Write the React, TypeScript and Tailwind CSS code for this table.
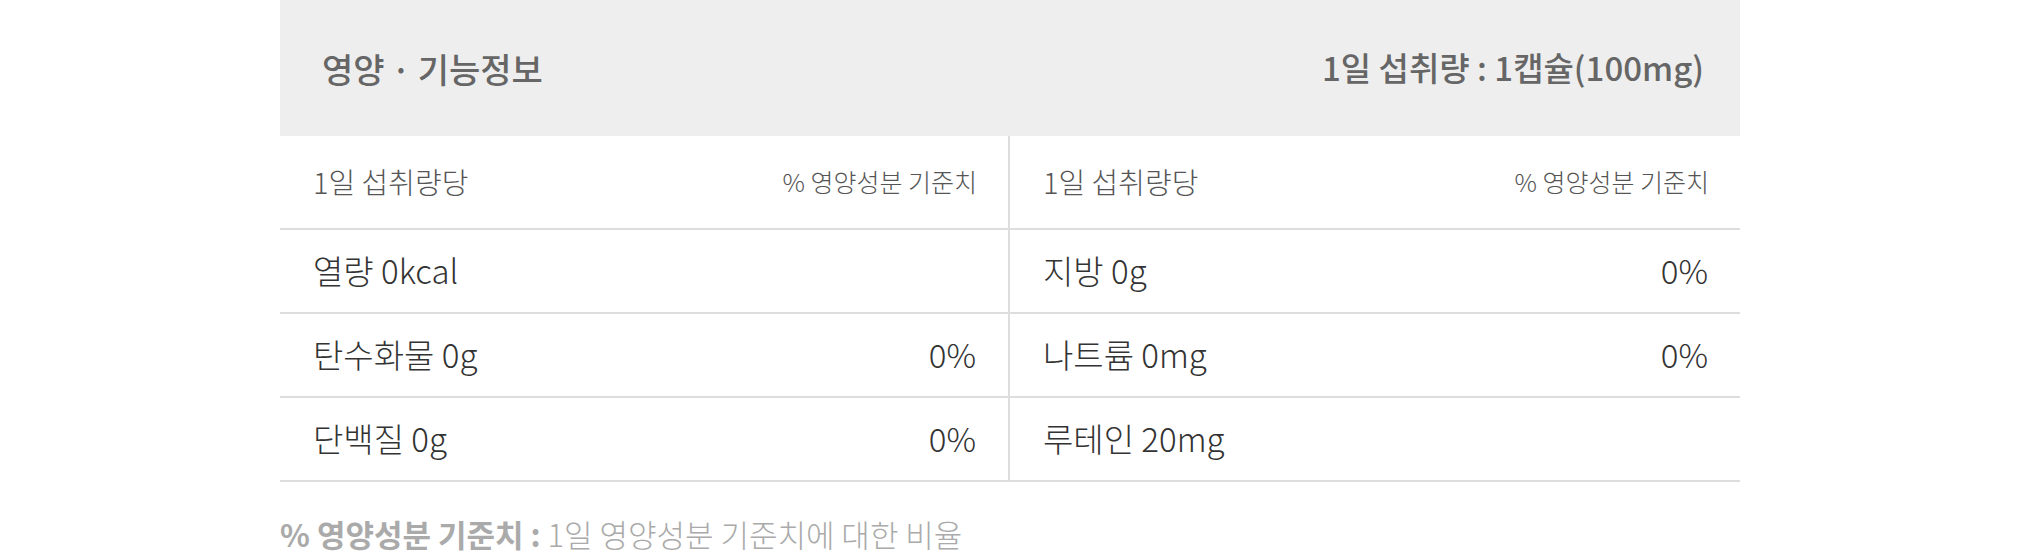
const left = [
  { name: "열량 0kcal", pct: "" },
  { name: "탄수화물 0g", pct: "0%" },
  { name: "단백질 0g", pct: "0%" },
];

const right = [
  { name: "지방 0g", pct: "0%" },
  { name: "나트륨 0mg", pct: "0%" },
  { name: "루테인 20mg", pct: "" },
];

function Column({ rows, last }: { rows: { name: string; pct: string }[]; last?: boolean }) {
  return (
    <div className={last ? "" : "border-r-2 border-[#dddddd]"}>
      <div className="h-[94px] flex items-center justify-between pl-[33px] pr-[31px] border-b-2 border-[#dddddd] text-[#555555] font-light">
        <span className="text-[29px]">1일 섭취량당</span>
        <span className="text-[25px]">% 영양성분 기준치</span>
      </div>
      {rows.map((r) => (
        <div
          key={r.name}
          className="h-[84px] flex items-center justify-between pl-[33px] pr-[32px] border-b-2 border-[#dddddd] text-[33px] font-light text-[#333333]"
        >
          <span>{r.name}</span>
          <span>{r.pct}</span>
        </div>
      ))}
    </div>
  );
}

export default function App() {
  return (
    <div
      className="w-full min-h-[553px] bg-white"
      style={{ fontFamily: '"Noto Sans CJK KR", "Noto Sans", sans-serif' }}
    >
      <div className="w-[1460px] mx-auto">
        <div className="h-[136px] bg-[#eeeeee] flex items-center justify-between pl-[42px] pr-[36px] font-medium text-[#666666]">
          <span className="text-[34px]">영양{"\u2009·\u2009"}기능정보</span>
          <span className="text-[33px]">1일 섭취량 : 1캡슐(100mg)</span>
        </div>
        <div className="grid grid-cols-2">
          <Column rows={left} />
          <Column rows={right} last />
        </div>
        <p className="mt-[34px] text-[31px] text-[#aaaaaa] font-light leading-[36px]">
          <span className="font-bold">% 영양성분 기준치 :</span> 1일 영양성분 기준치에 대한 비율
        </p>
      </div>
    </div>
  );
}
